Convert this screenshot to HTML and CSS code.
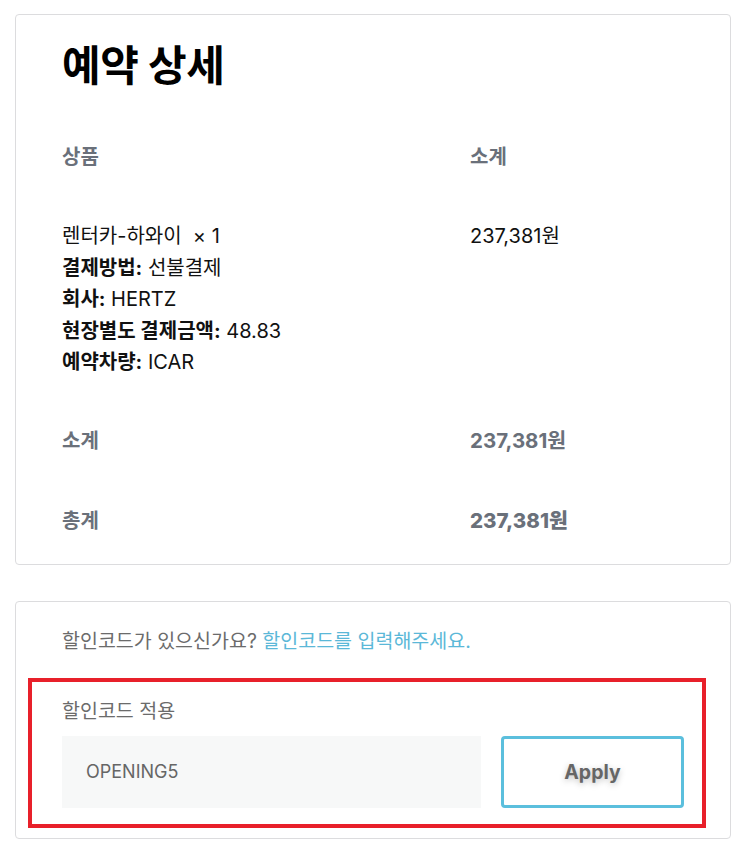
FILE: index.html
```html
<!DOCTYPE html>
<html lang="ko">
<head>
    <meta charset="UTF-8">
    <meta name="viewport" content="width=device-width, initial-scale=1.0">
    <title>예약 상세</title>
    <link rel="stylesheet" href="styles.css">
</head>
<body>
    <!-- 예약 상세 -->
    <div class="card order">
        <h1>예약 상세</h1>

        <div class="row head">
            <div class="col-name">상품</div>
            <div class="col-price">소계</div>
        </div>

        <div class="row item">
            <div class="col-name">
                <div>렌터카-하와이 &nbsp;× 1</div>
                <div><b>결제방법:</b> 선불결제</div>
                <div><b>회사:</b> HERTZ</div>
                <div><b>현장별도 결제금액:</b> 48.83</div>
                <div><b>예약차량:</b> ICAR</div>
            </div>
            <div class="col-price">237,381원</div>
        </div>

        <div class="row sum">
            <div class="col-name">소계</div>
            <div class="col-price">237,381원</div>
        </div>

        <div class="row sum total">
            <div class="col-name">총계</div>
            <div class="col-price">237,381원</div>
        </div>
    </div>

    <!-- 할인코드 -->
    <div class="card coupon">
        <p class="coupon-info">할인코드가 있으신가요? <a href="#">할인코드를 입력해주세요.</a></p>

        <div class="coupon-box">
            <label for="coupon_code">할인코드 적용</label>
            <div class="coupon-form">
                <input type="text" id="coupon_code" value="OPENING5">
                <button>Apply</button>
            </div>
        </div>
    </div>
</body>
</html>
```

FILE: styles.css
```css
body {
    margin: 0;
    padding: 14px 10px 16px 15px;
    background: #fff;
    font-family: Inter, "Noto Sans CJK KR", sans-serif;
    color: #111;
}

.card {
    border: 1px solid #dcdcde;
    border-radius: 4px;
    background: #fff;
}

.order {
    padding: 20px 46px 29px 46px;
}

h1 {
    margin: 0;
    font-size: 42px;
    font-weight: 700;
    line-height: 62px;
    letter-spacing: -0.4px;
    color: #000;
}

.row {
    display: flex;
}

.col-name {
    width: 408px;
}

.head {
    margin-top: 46px;
    font-size: 20px;
    font-weight: 700;
    color: #6a707a;
    line-height: 28px;
}

.item {
    margin-top: 50px;
    font-size: 20px;
    line-height: 31.5px;
}

.item b {
    font-weight: 700;
}

.sum {
    margin-top: 48px;
    font-size: 20px;
    font-weight: 700;
    color: #6a707a;
    line-height: 28px;
}

.sum .col-price {
    font-size: 20.5px;
}

.total {
    margin-top: 52px;
}

.total .col-price {
    font-weight: 800;
}

.coupon {
    margin-top: 36px;
    padding: 25px 24px 10px 12px;
}

.coupon-info {
    margin: 0 0 23px 34px;
    font-size: 19.5px;
    line-height: 28px;
    color: #6b6b6b;
}

.coupon-info a {
    color: #5bb8d8;
    text-decoration: none;
}

.coupon-box {
    border: 4px solid #e8202a;
    padding: 15px 18px 16px 30px;
}

.coupon-box label {
    display: block;
    font-size: 19.5px;
    line-height: 28px;
    color: #6b6b6b;
}

.coupon-form {
    display: flex;
    gap: 20px;
    margin-top: 11px;
}

.coupon-form input {
    flex: 1;
    height: 72px;
    box-sizing: border-box;
    border: none;
    background: #f7f8f8;
    padding: 0 24px;
    font-family: Inter, sans-serif;
    font-size: 18px;
    color: #666;
}

.coupon-form button {
    width: 183px;
    height: 72px;
    box-sizing: border-box;
    border: 3px solid #5bbfdd;
    border-radius: 4px;
    background: #fff;
    font-family: Inter, sans-serif;
    font-size: 19.5px;
    font-weight: 700;
    color: #666;
    text-shadow: 0 2px 6px rgba(0, 0, 0, 0.25);
    cursor: pointer;
}
```
